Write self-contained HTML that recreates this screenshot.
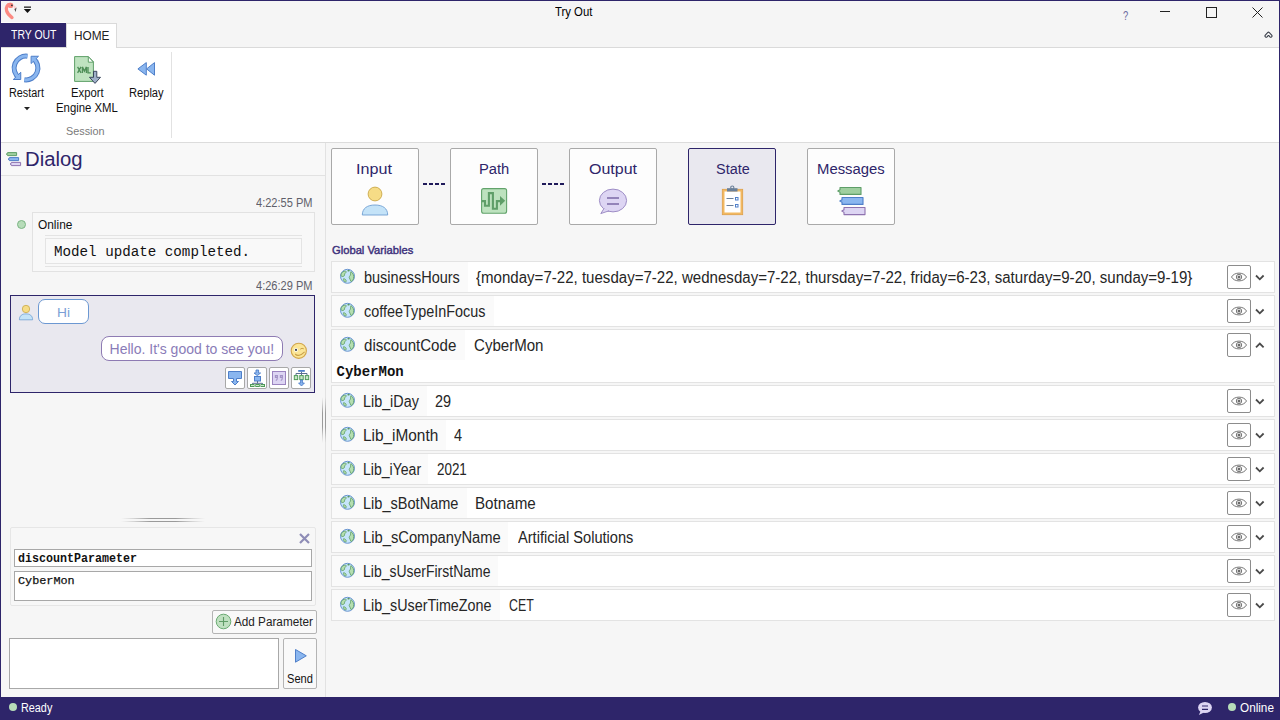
<!DOCTYPE html>
<html><head><meta charset="utf-8"><title>Try Out</title>
<style>
*{box-sizing:border-box;margin:0;padding:0}
html,body{width:1280px;height:720px;overflow:hidden;background:#f6f6f6;font-family:"Liberation Sans",sans-serif;color:#000}
.a{position:absolute}
.t{position:absolute;white-space:nowrap;line-height:1;transform-origin:0 0}
svg{position:absolute;overflow:visible}
</style></head><body>
<div class="a" style="left:0px;top:0px;width:1280px;height:23px;background:#f5f5f5"></div>
<div class="a" style="left:0px;top:22px;width:66px;height:1px;background:#fdfdfd"></div>
<svg style="left:0px;top:0px" width="20" height="20" viewBox="0 0 20 20"><path d="M11 4.6 C7.4 3.6 5.6 7.4 6.6 10.8 C7.4 13.6 9.6 15.8 12 17.6" stroke="#fc8a82" stroke-width="3.3" fill="none" stroke-linecap="round"/>
<circle cx="10.6" cy="5.4" r="2.7" fill="#fc8a82"/>
<circle cx="11.9" cy="5.3" r="0.9" fill="#333"/>
<path d="M13 4.6 L16.6 7.2 L14.4 9.4 Z" fill="#ffd3d3"/>
<path d="M14.4 9.2 L16.6 7.6 L15.6 12 Z" fill="#4a4a4a"/></svg>
<svg style="left:23px;top:6px" width="9" height="8" viewBox="0 0 9 8"><rect x="1" y="0.5" width="7" height="1.3" fill="#222"/><path d="M0.8 3 H8.2 L4.5 7 Z" fill="#111"/></svg>
<div class="a" style="left:1160px;top:11px;width:10px;height:1px;background:#222"></div>
<div class="a" style="left:1206px;top:7px;width:11px;height:11px;border:1px solid #222"></div>
<svg style="left:1252px;top:7px" width="11" height="11" viewBox="0 0 11 11"><path d="M0.5 0.5 L10.5 10.5 M10.5 0.5 L0.5 10.5" stroke="#222" stroke-width="1"/></svg>
<div class="a" style="left:0px;top:23px;width:1280px;height:24px;background:#f5f5f5"></div>
<div class="a" style="left:0px;top:47px;width:1280px;height:1px;background:#dadada"></div>
<div class="a" style="left:0px;top:23px;width:66px;height:24px;background:#2e256a"></div>
<div class="a" style="left:66px;top:23px;width:51px;height:25px;background:#fff;border:1px solid #dadada;border-bottom:none"></div>
<svg style="left:1264px;top:30px" width="10" height="9" viewBox="0 0 10 9"><path d="M2.2 6 L4.5 3.4 L6.8 6" stroke="#3a3f4a" stroke-width="3.4" fill="none" stroke-linecap="round" stroke-linejoin="round"/><path d="M2.2 6 L4.5 3.4 L6.8 6" stroke="#f5f5f5" stroke-width="1.3" fill="none" stroke-linecap="round" stroke-linejoin="round"/></svg>
<div class="a" style="left:1px;top:48px;width:1278px;height:94px;background:#fff"></div>
<div class="a" style="left:1px;top:142px;width:1278px;height:1px;background:#dcdcdc"></div>
<div class="a" style="left:171px;top:52px;width:1px;height:86px;background:#e2e2e2"></div>
<svg style="left:8px;top:50px" width="36" height="36" viewBox="0 0 36 36"><path d="M19.45 6.19 A11.9 11.9 0 0 0 11.17 27.75" stroke="#4f7fc9" stroke-width="5" fill="none"/>
<path d="M16.34 29.78 A11.9 11.9 0 0 0 24.83 8.25" stroke="#4f7fc9" stroke-width="5" fill="none"/>
<path d="M5.25 29.5 L12.75 29.5 L12.75 22.25 Z" fill="#8ab6ef" stroke="#4f7fc9" stroke-width="1" stroke-linejoin="round"/>
<path d="M23.1 6.25 L30.5 6.25 L23.1 13.5 Z" fill="#8ab6ef" stroke="#4f7fc9" stroke-width="1" stroke-linejoin="round"/>
<path d="M19.45 6.19 A11.9 11.9 0 0 0 11.17 27.75" stroke="#8ab6ef" stroke-width="3" fill="none"/>
<path d="M16.34 29.78 A11.9 11.9 0 0 0 24.83 8.25" stroke="#8ab6ef" stroke-width="3" fill="none"/>
<path d="M6.9 28.7 L12 28.7 L12 23.8 Z" fill="#8ab6ef"/>
<path d="M23.9 7 L28.8 7 L23.9 11.9 Z" fill="#8ab6ef"/></svg>
<svg style="left:24px;top:107px" width="6" height="4" viewBox="0 0 6 4"><path d="M0 0 H6 L3 3.2 Z" fill="#222"/></svg>
<svg style="left:70px;top:52px" width="36" height="36" viewBox="0 0 36 36"><path d="M4.6 4.6 H18.3 L23.4 9.7 V29.4 H4.6 Z" fill="#bfe3c0" stroke="#5fa068" stroke-width="1"/>
<path d="M18.3 4.6 V10.2 H23.4 Z" fill="#fff" stroke="#5fa068" stroke-width="1" stroke-linejoin="round"/>
<path d="M7.6 14.9 L11 20.9 M11 14.9 L7.6 20.9 M12.4 20.9 V14.9 L14.4 19.2 L16.4 14.9 V20.9 M18 14.9 V20.9 H20.8" stroke="#4f8f58" stroke-width="1.35" fill="none"/>
<path d="M23.5 19.3 H26.8 V25.3 H30.5 L25 31.4 L19.5 25.3 H23.5 Z" fill="#9fb0c8" stroke="#2f3b52" stroke-width="0.9" stroke-linejoin="round"/></svg>
<svg style="left:137px;top:61px" width="19" height="16" viewBox="0 0 19 16"><path d="M0.9 7.9 L9.3 1.6 V14.2 Z" fill="#8ab6ef" stroke="#4f7fc9" stroke-width="1" stroke-linejoin="round"/>
<path d="M9.6 7.9 L17.5 1.6 V14.2 Z" fill="#8ab6ef" stroke="#4f7fc9" stroke-width="1" stroke-linejoin="round"/></svg>
<div class="a" style="left:1px;top:143px;width:324px;height:32px;background:#f8f8f8"></div>
<div class="a" style="left:1px;top:175px;width:324px;height:1px;background:#e2e2e2"></div>
<div class="a" style="left:325px;top:143px;width:1px;height:554px;background:#e2e2e2"></div>
<svg style="left:5px;top:151px" width="17" height="16" viewBox="0 0 17 16"><path d="M2.6 1.6 H11.6 V4.6 H2.6 V3.8 L1.2 3.1 L2.6 2.4 Z" fill="#9fcf9f" stroke="#5e9e68" stroke-width="1" stroke-linejoin="round"/>
<path d="M4.4 6.6 H13.6 V9.6 H4.4 V8.8 L3 8.1 L4.4 7.4 Z" fill="#8ab6ef" stroke="#4f7fc9" stroke-width="1" stroke-linejoin="round"/>
<path d="M6.4 11.4 H15.6 V14.6 H6.4 V13.8 L5 13 L6.4 12.2 Z" fill="#ddd5f3" stroke="#8f73b0" stroke-width="1" stroke-linejoin="round"/></svg>
<div class="a" style="left:32px;top:212px;width:283px;height:60px;border:1px solid #e2e2e2;background:#f8f8f8"></div>
<div class="a" style="left:17px;top:220px;width:9px;height:9px;border-radius:50%;background:#b7dcb9;border:1px solid #7cb584"></div>
<div class="a" style="left:45px;top:235px;width:257px;height:1px;background:#e4e4e4"></div>
<div class="a" style="left:45px;top:238px;width:257px;height:26px;border:1px solid #e4e4e4;background:#f9f9f9"></div>
<div class="a" style="left:45px;top:266px;width:257px;height:1px;background:#e4e4e4"></div>
<div class="a" style="left:10px;top:295px;width:305px;height:98px;border:1px solid #2e256a;background:#e9e8ef"></div>
<svg style="left:18px;top:304px" width="16" height="17" viewBox="0 0 16 17"><circle cx="8" cy="5" r="3.7" fill="#f6dc86" stroke="#c9a84a" stroke-width="0.8"/>
<path d="M1.4 15.8 C1.4 11.5 4.2 9.9 8 9.9 C11.8 9.9 14.6 11.5 14.6 15.8 Z" fill="#c4e3f8" stroke="#6f9fd3" stroke-width="0.8"/></svg>
<div class="a" style="left:38px;top:299px;width:51px;height:25px;border:1px solid #6c98d2;border-radius:7px;background:#fff"></div>
<div class="a" style="left:101px;top:336px;width:182px;height:25px;border:1px solid #8e7bb3;border-radius:8px;background:#fff"></div>
<svg style="left:290px;top:342px" width="18" height="18" viewBox="0 0 18 18"><circle cx="8.8" cy="8.8" r="7.6" fill="#fbe596" stroke="#d2a64c" stroke-width="1.1"/>
<circle cx="6" cy="7.9" r="1.9" fill="#fff"/><circle cx="6" cy="7.9" r="1.1" fill="#3a4050"/>
<path d="M10.2 7.2 Q12 5.6 13.8 6.8" stroke="#c9a04a" stroke-width="1" fill="none"/>
<path d="M5.2 12 Q8.6 15.6 14.6 9.8" stroke="#c9a04a" stroke-width="1.1" fill="none"/></svg>
<div class="a" style="left:225px;top:367px;width:20px;height:22px;border:1px solid #a8a8a8;border-radius:2px;background:#fff"></div>
<div class="a" style="left:247px;top:367px;width:20px;height:22px;border:1px solid #a8a8a8;border-radius:2px;background:#fff"></div>
<div class="a" style="left:269px;top:367px;width:20px;height:22px;border:1px solid #a8a8a8;border-radius:2px;background:#fff"></div>
<div class="a" style="left:291px;top:367px;width:20px;height:22px;border:1px solid #a8a8a8;border-radius:2px;background:#fff"></div>
<svg style="left:227px;top:370px" width="17" height="17" viewBox="0 0 17 17"><path d="M1.5 1.5 H14.5 V8.5 H9.5 V11.5 H11.5 L8 15 L4.5 11.5 H6.5 V8.5 H1.5 Z" fill="#8ab6ef" stroke="#4f7fc9" stroke-width="1"/></svg>
<svg style="left:249px;top:369px" width="17" height="18" viewBox="0 0 17 18"><path d="M7 1 V4 H5 L8.3 6.6 L11.6 4 H9.6 V1 Z" fill="#8ab6ef" stroke="#4f7fc9" stroke-width="0.9"/>
<rect x="5.5" y="7.5" width="6" height="4.5" fill="#8ab6ef" stroke="#4f7fc9" stroke-width="1"/>
<path d="M8.5 12 V14.3 M3.5 16 V14.3 H13.5 V16" stroke="#5a6f90" stroke-width="1" fill="none"/>
<rect x="1.5" y="15.5" width="3.5" height="2" fill="#c9e8c9" stroke="#4e9a58" stroke-width="1"/><rect x="6.8" y="15.5" width="3.5" height="2" fill="#c9e8c9" stroke="#4e9a58" stroke-width="1"/><rect x="12" y="15.5" width="3.5" height="2" fill="#c9e8c9" stroke="#4e9a58" stroke-width="1"/></svg>
<svg style="left:271px;top:370px" width="17" height="17" viewBox="0 0 17 17"><rect x="1.5" y="1.5" width="13" height="13" fill="#ddd5f3" stroke="#9b84c0" stroke-width="1"/>
<path d="M4.4 5.6 H6.4 V7.4 H4.4 Z M6.4 7.4 Q6.4 9.6 4.8 10.6 M9.4 5.6 H11.4 V7.4 H9.4 Z M11.4 7.4 Q11.4 9.6 9.8 10.6" stroke="#a394c6" stroke-width="1.1" fill="none"/></svg>
<svg style="left:293px;top:369px" width="18" height="18" viewBox="0 0 18 18"><rect x="5.2" y="1" width="6.6" height="1.8" fill="#4f7fc9"/>
<path d="M8.5 2.8 V6.2 M3 6.2 V4.5 H14 V6.2" stroke="#5a6f90" stroke-width="1" fill="none"/>
<rect x="1.3" y="6.6" width="3.4" height="4" fill="#c9e8c9" stroke="#4e9a58" stroke-width="1"/>
<rect x="6.8" y="6.6" width="3.4" height="4" fill="#c9e8c9" stroke="#4e9a58" stroke-width="1"/>
<rect x="12.3" y="6.6" width="3.4" height="4" fill="#c9e8c9" stroke="#4e9a58" stroke-width="1"/>
<path d="M7.6 11 V14 H5.6 L8.5 17 L11.4 14 H9.4 V11 Z" fill="#8ab6ef" stroke="#4f7fc9" stroke-width="0.9"/></svg>
<div class="a" style="left:121px;top:518px;width:84px;height:1px;background:linear-gradient(90deg,rgba(150,150,150,0),rgba(150,150,150,.35) 15%,#9a9a9a 35%,#9a9a9a 65%,rgba(150,150,150,.35) 85%,rgba(150,150,150,0))"></div>
<div class="a" style="left:121px;top:521px;width:84px;height:1px;background:linear-gradient(90deg,rgba(150,150,150,0),rgba(150,150,150,.35) 15%,#9a9a9a 35%,#9a9a9a 65%,rgba(150,150,150,.35) 85%,rgba(150,150,150,0))"></div>
<div class="a" style="left:322px;top:397px;width:1px;height:46px;background:linear-gradient(180deg,rgba(150,150,150,0),rgba(150,150,150,.35) 15%,#9a9a9a 35%,#9a9a9a 65%,rgba(150,150,150,.35) 85%,rgba(150,150,150,0))"></div>
<div class="a" style="left:325px;top:397px;width:1px;height:46px;background:linear-gradient(180deg,rgba(150,150,150,0),rgba(150,150,150,.35) 15%,#9a9a9a 35%,#9a9a9a 65%,rgba(150,150,150,.35) 85%,rgba(150,150,150,0))"></div>
<div class="a" style="left:10px;top:527px;width:306px;height:79px;border:1px solid #e6e6e6;border-radius:2px;background:#f7f7f7"></div>
<svg style="left:299px;top:533px" width="11" height="11" viewBox="0 0 11 11"><path d="M1 1 L10 10 M10 1 L1 10" stroke="#8e8cb6" stroke-width="2.2"/></svg>
<div class="a" style="left:14px;top:549px;width:298px;height:18px;border:1px solid #a8a8a8;background:#fff"></div>
<div class="a" style="left:14px;top:571px;width:298px;height:30px;border:1px solid #a8a8a8;background:#fff"></div>
<div class="a" style="left:212px;top:610px;width:105px;height:24px;border:1px solid #b4b4b4;border-radius:2px;background:#f9f9f9"></div>
<svg style="left:215px;top:613px" width="17" height="17" viewBox="0 0 17 17"><circle cx="8.5" cy="8.5" r="7.3" fill="#bfe0c0" stroke="#6aaa72" stroke-width="1"/>
<path d="M8.5 4 V13 M4 8.5 H13" stroke="#5f9c66" stroke-width="1.1"/></svg>
<div class="a" style="left:9px;top:638px;width:270px;height:51px;border:1px solid #a8a8a8;background:#fff"></div>
<div class="a" style="left:283px;top:638px;width:34px;height:51px;border:1px solid #b4b4b4;border-radius:2px;background:#f9f9f9"></div>
<svg style="left:294px;top:648px" width="14" height="16" viewBox="0 0 14 16"><path d="M1.5 1.5 L12.3 7.8 L1.5 14.2 Z" fill="#8ab6ef" stroke="#4f7fc9" stroke-width="1" stroke-linejoin="round"/></svg>
<div class="a" style="left:331px;top:148px;width:88px;height:77px;border:1px solid #a9a9a9;border-radius:2px;background:#fdfdfd"></div>
<div class="a" style="left:450px;top:148px;width:88px;height:77px;border:1px solid #a9a9a9;border-radius:2px;background:#fdfdfd"></div>
<div class="a" style="left:569px;top:148px;width:88px;height:77px;border:1px solid #a9a9a9;border-radius:2px;background:#fdfdfd"></div>
<div class="a" style="left:688px;top:148px;width:88px;height:77px;border:1px solid #2e256a;border-radius:2px;background:#e9e8ef"></div>
<div class="a" style="left:807px;top:148px;width:88px;height:77px;border:1px solid #a9a9a9;border-radius:2px;background:#fdfdfd"></div>
<div class="a" style="left:423px;top:183px;width:22px;height:2px;background:repeating-linear-gradient(90deg,#1f1a5a 0 4px,transparent 4px 6px)"></div>
<div class="a" style="left:542px;top:183px;width:22px;height:2px;background:repeating-linear-gradient(90deg,#1f1a5a 0 4px,transparent 4px 6px)"></div>
<svg style="left:361px;top:186px" width="28" height="30" viewBox="0 0 28 30"><circle cx="14" cy="8" r="6.9" fill="#f6dc86" stroke="#c9a84a" stroke-width="0.9"/>
<path d="M1.3 29 C1.3 22.5 6 19 14 19 C22 19 26.7 22.5 26.7 29 Z" fill="#c4e3f8" stroke="#6f9fd3" stroke-width="0.9"/></svg>
<svg style="left:478px;top:185px" width="32" height="32" viewBox="0 0 32 32"><rect x="3.6" y="3.6" width="25" height="24.6" rx="2" fill="#bde2be" stroke="#62a36b" stroke-width="1.1"/>
<path d="M3.8 16.1 H7 V20.8 H10.9 V8.1 H14.9 V23.8 H18.9 V16.1 H22.5" stroke="#5f9e68" stroke-width="2.1" fill="none"/>
<path d="M22 10.9 L27.2 15.8 L22 20.7 Z" fill="#5f9e68"/></svg>
<svg style="left:598px;top:188px" width="30" height="27" viewBox="0 0 30 27"><ellipse cx="15" cy="12.5" rx="13.6" ry="11.4" fill="#ddd5f3" stroke="#9583bf" stroke-width="0.9"/>
<path d="M6 20.5 L2.8 25.6 L11 22.8" fill="#ddd5f3" stroke="#9583bf" stroke-width="0.9"/>
<path d="M9 10 H21 M9 16 H21" stroke="#7b68a6" stroke-width="1.6"/></svg>
<svg style="left:720px;top:185px" width="25" height="31" viewBox="0 0 25 31"><rect x="2.3" y="4.3" width="20.4" height="25.4" fill="#f2b860" stroke="#dda04a" stroke-width="0.8"/>
<rect x="4.5" y="6.5" width="16" height="21" fill="#fff"/>
<path d="M7 3.2 H17.5 V6.5 H7 Z" fill="#6a7f99"/>
<circle cx="12.3" cy="2.6" r="1.6" fill="none" stroke="#6a7f99" stroke-width="1.1"/>
<path d="M6.5 13.5 H13.5 M6.5 20.5 H13.5" stroke="#6a7f99" stroke-width="1"/>
<rect x="15.5" y="12.5" width="2.5" height="2.5" fill="none" stroke="#4f7fc9" stroke-width="1"/>
<rect x="15.5" y="19.5" width="2.5" height="2.5" fill="none" stroke="#4f7fc9" stroke-width="1"/></svg>
<svg style="left:836px;top:186px" width="32" height="30" viewBox="0 0 32 30"><path d="M4 1.5 H25 V8.4 H4 V6.2 L1.8 4.95 L4 3.7 Z" fill="#9fcf9f" stroke="#5e9e68" stroke-width="1.1" stroke-linejoin="round"/>
<path d="M6 11.5 H27 V18.4 H6 V16.2 L3.8 14.95 L6 13.7 Z" fill="#8ab6ef" stroke="#4f7fc9" stroke-width="1.1" stroke-linejoin="round"/>
<path d="M8 21.5 H29 V28.6 H8 V26.4 L5.8 25.05 L8 23.7 Z" fill="#ddd5f3" stroke="#8f73b0" stroke-width="1.1" stroke-linejoin="round"/></svg>
<div class="a" style="left:331px;top:261px;width:944px;height:32px;border:1px solid #e3e3e3;background:#fff"></div>
<div class="a" style="left:332px;top:262px;width:136px;height:30px;background:#fafafa"></div>
<svg style="left:339px;top:268px" width="17" height="17" viewBox="0 0 17 17"><g transform="translate(0.5 0.3)"><circle cx="8" cy="8" r="7" fill="#c6e5fa" stroke="#6a95d0" stroke-width="1"/>
<path d="M2.4 4.6 C3.6 2.8 5.8 2.4 6.8 3.4 C6.4 4.8 4.9 5 5 6.6 C5.1 7.8 3.8 8.4 2.1 8.1 C1.3 6.9 1.5 5.7 2.4 4.6 Z" fill="#b5dfb0" stroke="#5a9a60" stroke-width="0.8"/>
<path d="M7.8 2.1 C9 1.5 10.5 1.9 10.3 2.8 C9.5 3.6 8.2 3.4 7.8 2.1 Z" fill="#5a9a60"/>
<path d="M11.4 3.3 C13.7 4.8 14.6 7.5 14 10.3 C13.4 12.1 12.4 13 11.5 13.3 C11.3 11.5 9.9 10.7 9.7 9.1 C9.7 7.6 11.6 7.2 11 5.5 Z" fill="#b5dfb0" stroke="#5a9a60" stroke-width="0.8"/>
<path d="M4.1 10.4 C5.7 10.6 6.9 11.6 6.7 13.1 C6.3 13.9 5.3 13.7 4.5 12.7 C3.9 11.9 3.7 10.9 4.1 10.4 Z" fill="#b5dfb0" stroke="#5a9a60" stroke-width="0.8"/></g></svg>
<div class="a" style="left:1227px;top:265px;width:24px;height:24px;border:1px solid #8c8c8c;border-radius:2px;background:#fff"></div>
<svg style="left:1231px;top:272px" width="16" height="10" viewBox="0 0 16 10"><path d="M0.5 5 C3.3 -0.2 12.7 -0.2 15.5 5 C12.7 10.2 3.3 10.2 0.5 5 Z" fill="none" stroke="#777" stroke-width="1"/>
<circle cx="8" cy="5" r="2.7" fill="none" stroke="#777" stroke-width="1"/><circle cx="8" cy="5" r="1.5" fill="#6a6a6a"/></svg>
<svg style="left:1255px;top:273.8px" width="10" height="7" viewBox="0 0 10 7"><path d="M1 1.5 L4.8 5.3 L8.6 1.5" stroke="#4a4a4a" stroke-width="1.8" fill="none"/></svg>
<div class="a" style="left:331px;top:295px;width:944px;height:32px;border:1px solid #e3e3e3;background:#fff"></div>
<div class="a" style="left:332px;top:296px;width:162px;height:30px;background:#fafafa"></div>
<svg style="left:339px;top:302px" width="17" height="17" viewBox="0 0 17 17"><g transform="translate(0.5 0.3)"><circle cx="8" cy="8" r="7" fill="#c6e5fa" stroke="#6a95d0" stroke-width="1"/>
<path d="M2.4 4.6 C3.6 2.8 5.8 2.4 6.8 3.4 C6.4 4.8 4.9 5 5 6.6 C5.1 7.8 3.8 8.4 2.1 8.1 C1.3 6.9 1.5 5.7 2.4 4.6 Z" fill="#b5dfb0" stroke="#5a9a60" stroke-width="0.8"/>
<path d="M7.8 2.1 C9 1.5 10.5 1.9 10.3 2.8 C9.5 3.6 8.2 3.4 7.8 2.1 Z" fill="#5a9a60"/>
<path d="M11.4 3.3 C13.7 4.8 14.6 7.5 14 10.3 C13.4 12.1 12.4 13 11.5 13.3 C11.3 11.5 9.9 10.7 9.7 9.1 C9.7 7.6 11.6 7.2 11 5.5 Z" fill="#b5dfb0" stroke="#5a9a60" stroke-width="0.8"/>
<path d="M4.1 10.4 C5.7 10.6 6.9 11.6 6.7 13.1 C6.3 13.9 5.3 13.7 4.5 12.7 C3.9 11.9 3.7 10.9 4.1 10.4 Z" fill="#b5dfb0" stroke="#5a9a60" stroke-width="0.8"/></g></svg>
<div class="a" style="left:1227px;top:299px;width:24px;height:24px;border:1px solid #8c8c8c;border-radius:2px;background:#fff"></div>
<svg style="left:1231px;top:306px" width="16" height="10" viewBox="0 0 16 10"><path d="M0.5 5 C3.3 -0.2 12.7 -0.2 15.5 5 C12.7 10.2 3.3 10.2 0.5 5 Z" fill="none" stroke="#777" stroke-width="1"/>
<circle cx="8" cy="5" r="2.7" fill="none" stroke="#777" stroke-width="1"/><circle cx="8" cy="5" r="1.5" fill="#6a6a6a"/></svg>
<svg style="left:1255px;top:307.8px" width="10" height="7" viewBox="0 0 10 7"><path d="M1 1.5 L4.8 5.3 L8.6 1.5" stroke="#4a4a4a" stroke-width="1.8" fill="none"/></svg>
<div class="a" style="left:331px;top:329px;width:944px;height:54px;border:1px solid #e3e3e3;background:#fff"></div>
<div class="a" style="left:332px;top:330px;width:133px;height:30px;background:#fafafa"></div>
<svg style="left:339px;top:336px" width="17" height="17" viewBox="0 0 17 17"><g transform="translate(0.5 0.3)"><circle cx="8" cy="8" r="7" fill="#c6e5fa" stroke="#6a95d0" stroke-width="1"/>
<path d="M2.4 4.6 C3.6 2.8 5.8 2.4 6.8 3.4 C6.4 4.8 4.9 5 5 6.6 C5.1 7.8 3.8 8.4 2.1 8.1 C1.3 6.9 1.5 5.7 2.4 4.6 Z" fill="#b5dfb0" stroke="#5a9a60" stroke-width="0.8"/>
<path d="M7.8 2.1 C9 1.5 10.5 1.9 10.3 2.8 C9.5 3.6 8.2 3.4 7.8 2.1 Z" fill="#5a9a60"/>
<path d="M11.4 3.3 C13.7 4.8 14.6 7.5 14 10.3 C13.4 12.1 12.4 13 11.5 13.3 C11.3 11.5 9.9 10.7 9.7 9.1 C9.7 7.6 11.6 7.2 11 5.5 Z" fill="#b5dfb0" stroke="#5a9a60" stroke-width="0.8"/>
<path d="M4.1 10.4 C5.7 10.6 6.9 11.6 6.7 13.1 C6.3 13.9 5.3 13.7 4.5 12.7 C3.9 11.9 3.7 10.9 4.1 10.4 Z" fill="#b5dfb0" stroke="#5a9a60" stroke-width="0.8"/></g></svg>
<div class="a" style="left:1227px;top:333px;width:24px;height:24px;border:1px solid #8c8c8c;border-radius:2px;background:#fff"></div>
<svg style="left:1231px;top:340px" width="16" height="10" viewBox="0 0 16 10"><path d="M0.5 5 C3.3 -0.2 12.7 -0.2 15.5 5 C12.7 10.2 3.3 10.2 0.5 5 Z" fill="none" stroke="#777" stroke-width="1"/>
<circle cx="8" cy="5" r="2.7" fill="none" stroke="#777" stroke-width="1"/><circle cx="8" cy="5" r="1.5" fill="#6a6a6a"/></svg>
<svg style="left:1255px;top:341.8px" width="10" height="7" viewBox="0 0 10 7"><path d="M1 5.3 L4.8 1.5 L8.6 5.3" stroke="#4a4a4a" stroke-width="1.8" fill="none"/></svg>
<div class="a" style="left:331px;top:385px;width:944px;height:32px;border:1px solid #e3e3e3;background:#fff"></div>
<div class="a" style="left:332px;top:386px;width:95px;height:30px;background:#fafafa"></div>
<svg style="left:339px;top:392px" width="17" height="17" viewBox="0 0 17 17"><g transform="translate(0.5 0.3)"><circle cx="8" cy="8" r="7" fill="#c6e5fa" stroke="#6a95d0" stroke-width="1"/>
<path d="M2.4 4.6 C3.6 2.8 5.8 2.4 6.8 3.4 C6.4 4.8 4.9 5 5 6.6 C5.1 7.8 3.8 8.4 2.1 8.1 C1.3 6.9 1.5 5.7 2.4 4.6 Z" fill="#b5dfb0" stroke="#5a9a60" stroke-width="0.8"/>
<path d="M7.8 2.1 C9 1.5 10.5 1.9 10.3 2.8 C9.5 3.6 8.2 3.4 7.8 2.1 Z" fill="#5a9a60"/>
<path d="M11.4 3.3 C13.7 4.8 14.6 7.5 14 10.3 C13.4 12.1 12.4 13 11.5 13.3 C11.3 11.5 9.9 10.7 9.7 9.1 C9.7 7.6 11.6 7.2 11 5.5 Z" fill="#b5dfb0" stroke="#5a9a60" stroke-width="0.8"/>
<path d="M4.1 10.4 C5.7 10.6 6.9 11.6 6.7 13.1 C6.3 13.9 5.3 13.7 4.5 12.7 C3.9 11.9 3.7 10.9 4.1 10.4 Z" fill="#b5dfb0" stroke="#5a9a60" stroke-width="0.8"/></g></svg>
<div class="a" style="left:1227px;top:389px;width:24px;height:24px;border:1px solid #8c8c8c;border-radius:2px;background:#fff"></div>
<svg style="left:1231px;top:396px" width="16" height="10" viewBox="0 0 16 10"><path d="M0.5 5 C3.3 -0.2 12.7 -0.2 15.5 5 C12.7 10.2 3.3 10.2 0.5 5 Z" fill="none" stroke="#777" stroke-width="1"/>
<circle cx="8" cy="5" r="2.7" fill="none" stroke="#777" stroke-width="1"/><circle cx="8" cy="5" r="1.5" fill="#6a6a6a"/></svg>
<svg style="left:1255px;top:397.8px" width="10" height="7" viewBox="0 0 10 7"><path d="M1 1.5 L4.8 5.3 L8.6 1.5" stroke="#4a4a4a" stroke-width="1.8" fill="none"/></svg>
<div class="a" style="left:331px;top:419px;width:944px;height:32px;border:1px solid #e3e3e3;background:#fff"></div>
<div class="a" style="left:332px;top:420px;width:114px;height:30px;background:#fafafa"></div>
<svg style="left:339px;top:426px" width="17" height="17" viewBox="0 0 17 17"><g transform="translate(0.5 0.3)"><circle cx="8" cy="8" r="7" fill="#c6e5fa" stroke="#6a95d0" stroke-width="1"/>
<path d="M2.4 4.6 C3.6 2.8 5.8 2.4 6.8 3.4 C6.4 4.8 4.9 5 5 6.6 C5.1 7.8 3.8 8.4 2.1 8.1 C1.3 6.9 1.5 5.7 2.4 4.6 Z" fill="#b5dfb0" stroke="#5a9a60" stroke-width="0.8"/>
<path d="M7.8 2.1 C9 1.5 10.5 1.9 10.3 2.8 C9.5 3.6 8.2 3.4 7.8 2.1 Z" fill="#5a9a60"/>
<path d="M11.4 3.3 C13.7 4.8 14.6 7.5 14 10.3 C13.4 12.1 12.4 13 11.5 13.3 C11.3 11.5 9.9 10.7 9.7 9.1 C9.7 7.6 11.6 7.2 11 5.5 Z" fill="#b5dfb0" stroke="#5a9a60" stroke-width="0.8"/>
<path d="M4.1 10.4 C5.7 10.6 6.9 11.6 6.7 13.1 C6.3 13.9 5.3 13.7 4.5 12.7 C3.9 11.9 3.7 10.9 4.1 10.4 Z" fill="#b5dfb0" stroke="#5a9a60" stroke-width="0.8"/></g></svg>
<div class="a" style="left:1227px;top:423px;width:24px;height:24px;border:1px solid #8c8c8c;border-radius:2px;background:#fff"></div>
<svg style="left:1231px;top:430px" width="16" height="10" viewBox="0 0 16 10"><path d="M0.5 5 C3.3 -0.2 12.7 -0.2 15.5 5 C12.7 10.2 3.3 10.2 0.5 5 Z" fill="none" stroke="#777" stroke-width="1"/>
<circle cx="8" cy="5" r="2.7" fill="none" stroke="#777" stroke-width="1"/><circle cx="8" cy="5" r="1.5" fill="#6a6a6a"/></svg>
<svg style="left:1255px;top:431.8px" width="10" height="7" viewBox="0 0 10 7"><path d="M1 1.5 L4.8 5.3 L8.6 1.5" stroke="#4a4a4a" stroke-width="1.8" fill="none"/></svg>
<div class="a" style="left:331px;top:453px;width:944px;height:32px;border:1px solid #e3e3e3;background:#fff"></div>
<div class="a" style="left:332px;top:454px;width:96px;height:30px;background:#fafafa"></div>
<svg style="left:339px;top:460px" width="17" height="17" viewBox="0 0 17 17"><g transform="translate(0.5 0.3)"><circle cx="8" cy="8" r="7" fill="#c6e5fa" stroke="#6a95d0" stroke-width="1"/>
<path d="M2.4 4.6 C3.6 2.8 5.8 2.4 6.8 3.4 C6.4 4.8 4.9 5 5 6.6 C5.1 7.8 3.8 8.4 2.1 8.1 C1.3 6.9 1.5 5.7 2.4 4.6 Z" fill="#b5dfb0" stroke="#5a9a60" stroke-width="0.8"/>
<path d="M7.8 2.1 C9 1.5 10.5 1.9 10.3 2.8 C9.5 3.6 8.2 3.4 7.8 2.1 Z" fill="#5a9a60"/>
<path d="M11.4 3.3 C13.7 4.8 14.6 7.5 14 10.3 C13.4 12.1 12.4 13 11.5 13.3 C11.3 11.5 9.9 10.7 9.7 9.1 C9.7 7.6 11.6 7.2 11 5.5 Z" fill="#b5dfb0" stroke="#5a9a60" stroke-width="0.8"/>
<path d="M4.1 10.4 C5.7 10.6 6.9 11.6 6.7 13.1 C6.3 13.9 5.3 13.7 4.5 12.7 C3.9 11.9 3.7 10.9 4.1 10.4 Z" fill="#b5dfb0" stroke="#5a9a60" stroke-width="0.8"/></g></svg>
<div class="a" style="left:1227px;top:457px;width:24px;height:24px;border:1px solid #8c8c8c;border-radius:2px;background:#fff"></div>
<svg style="left:1231px;top:464px" width="16" height="10" viewBox="0 0 16 10"><path d="M0.5 5 C3.3 -0.2 12.7 -0.2 15.5 5 C12.7 10.2 3.3 10.2 0.5 5 Z" fill="none" stroke="#777" stroke-width="1"/>
<circle cx="8" cy="5" r="2.7" fill="none" stroke="#777" stroke-width="1"/><circle cx="8" cy="5" r="1.5" fill="#6a6a6a"/></svg>
<svg style="left:1255px;top:465.8px" width="10" height="7" viewBox="0 0 10 7"><path d="M1 1.5 L4.8 5.3 L8.6 1.5" stroke="#4a4a4a" stroke-width="1.8" fill="none"/></svg>
<div class="a" style="left:331px;top:487px;width:944px;height:32px;border:1px solid #e3e3e3;background:#fff"></div>
<div class="a" style="left:332px;top:488px;width:135px;height:30px;background:#fafafa"></div>
<svg style="left:339px;top:494px" width="17" height="17" viewBox="0 0 17 17"><g transform="translate(0.5 0.3)"><circle cx="8" cy="8" r="7" fill="#c6e5fa" stroke="#6a95d0" stroke-width="1"/>
<path d="M2.4 4.6 C3.6 2.8 5.8 2.4 6.8 3.4 C6.4 4.8 4.9 5 5 6.6 C5.1 7.8 3.8 8.4 2.1 8.1 C1.3 6.9 1.5 5.7 2.4 4.6 Z" fill="#b5dfb0" stroke="#5a9a60" stroke-width="0.8"/>
<path d="M7.8 2.1 C9 1.5 10.5 1.9 10.3 2.8 C9.5 3.6 8.2 3.4 7.8 2.1 Z" fill="#5a9a60"/>
<path d="M11.4 3.3 C13.7 4.8 14.6 7.5 14 10.3 C13.4 12.1 12.4 13 11.5 13.3 C11.3 11.5 9.9 10.7 9.7 9.1 C9.7 7.6 11.6 7.2 11 5.5 Z" fill="#b5dfb0" stroke="#5a9a60" stroke-width="0.8"/>
<path d="M4.1 10.4 C5.7 10.6 6.9 11.6 6.7 13.1 C6.3 13.9 5.3 13.7 4.5 12.7 C3.9 11.9 3.7 10.9 4.1 10.4 Z" fill="#b5dfb0" stroke="#5a9a60" stroke-width="0.8"/></g></svg>
<div class="a" style="left:1227px;top:491px;width:24px;height:24px;border:1px solid #8c8c8c;border-radius:2px;background:#fff"></div>
<svg style="left:1231px;top:498px" width="16" height="10" viewBox="0 0 16 10"><path d="M0.5 5 C3.3 -0.2 12.7 -0.2 15.5 5 C12.7 10.2 3.3 10.2 0.5 5 Z" fill="none" stroke="#777" stroke-width="1"/>
<circle cx="8" cy="5" r="2.7" fill="none" stroke="#777" stroke-width="1"/><circle cx="8" cy="5" r="1.5" fill="#6a6a6a"/></svg>
<svg style="left:1255px;top:499.8px" width="10" height="7" viewBox="0 0 10 7"><path d="M1 1.5 L4.8 5.3 L8.6 1.5" stroke="#4a4a4a" stroke-width="1.8" fill="none"/></svg>
<div class="a" style="left:331px;top:521px;width:944px;height:32px;border:1px solid #e3e3e3;background:#fff"></div>
<div class="a" style="left:332px;top:522px;width:176px;height:30px;background:#fafafa"></div>
<svg style="left:339px;top:528px" width="17" height="17" viewBox="0 0 17 17"><g transform="translate(0.5 0.3)"><circle cx="8" cy="8" r="7" fill="#c6e5fa" stroke="#6a95d0" stroke-width="1"/>
<path d="M2.4 4.6 C3.6 2.8 5.8 2.4 6.8 3.4 C6.4 4.8 4.9 5 5 6.6 C5.1 7.8 3.8 8.4 2.1 8.1 C1.3 6.9 1.5 5.7 2.4 4.6 Z" fill="#b5dfb0" stroke="#5a9a60" stroke-width="0.8"/>
<path d="M7.8 2.1 C9 1.5 10.5 1.9 10.3 2.8 C9.5 3.6 8.2 3.4 7.8 2.1 Z" fill="#5a9a60"/>
<path d="M11.4 3.3 C13.7 4.8 14.6 7.5 14 10.3 C13.4 12.1 12.4 13 11.5 13.3 C11.3 11.5 9.9 10.7 9.7 9.1 C9.7 7.6 11.6 7.2 11 5.5 Z" fill="#b5dfb0" stroke="#5a9a60" stroke-width="0.8"/>
<path d="M4.1 10.4 C5.7 10.6 6.9 11.6 6.7 13.1 C6.3 13.9 5.3 13.7 4.5 12.7 C3.9 11.9 3.7 10.9 4.1 10.4 Z" fill="#b5dfb0" stroke="#5a9a60" stroke-width="0.8"/></g></svg>
<div class="a" style="left:1227px;top:525px;width:24px;height:24px;border:1px solid #8c8c8c;border-radius:2px;background:#fff"></div>
<svg style="left:1231px;top:532px" width="16" height="10" viewBox="0 0 16 10"><path d="M0.5 5 C3.3 -0.2 12.7 -0.2 15.5 5 C12.7 10.2 3.3 10.2 0.5 5 Z" fill="none" stroke="#777" stroke-width="1"/>
<circle cx="8" cy="5" r="2.7" fill="none" stroke="#777" stroke-width="1"/><circle cx="8" cy="5" r="1.5" fill="#6a6a6a"/></svg>
<svg style="left:1255px;top:533.8px" width="10" height="7" viewBox="0 0 10 7"><path d="M1 1.5 L4.8 5.3 L8.6 1.5" stroke="#4a4a4a" stroke-width="1.8" fill="none"/></svg>
<div class="a" style="left:331px;top:555px;width:944px;height:32px;border:1px solid #e3e3e3;background:#fff"></div>
<div class="a" style="left:332px;top:556px;width:166px;height:30px;background:#fafafa"></div>
<svg style="left:339px;top:562px" width="17" height="17" viewBox="0 0 17 17"><g transform="translate(0.5 0.3)"><circle cx="8" cy="8" r="7" fill="#c6e5fa" stroke="#6a95d0" stroke-width="1"/>
<path d="M2.4 4.6 C3.6 2.8 5.8 2.4 6.8 3.4 C6.4 4.8 4.9 5 5 6.6 C5.1 7.8 3.8 8.4 2.1 8.1 C1.3 6.9 1.5 5.7 2.4 4.6 Z" fill="#b5dfb0" stroke="#5a9a60" stroke-width="0.8"/>
<path d="M7.8 2.1 C9 1.5 10.5 1.9 10.3 2.8 C9.5 3.6 8.2 3.4 7.8 2.1 Z" fill="#5a9a60"/>
<path d="M11.4 3.3 C13.7 4.8 14.6 7.5 14 10.3 C13.4 12.1 12.4 13 11.5 13.3 C11.3 11.5 9.9 10.7 9.7 9.1 C9.7 7.6 11.6 7.2 11 5.5 Z" fill="#b5dfb0" stroke="#5a9a60" stroke-width="0.8"/>
<path d="M4.1 10.4 C5.7 10.6 6.9 11.6 6.7 13.1 C6.3 13.9 5.3 13.7 4.5 12.7 C3.9 11.9 3.7 10.9 4.1 10.4 Z" fill="#b5dfb0" stroke="#5a9a60" stroke-width="0.8"/></g></svg>
<div class="a" style="left:1227px;top:559px;width:24px;height:24px;border:1px solid #8c8c8c;border-radius:2px;background:#fff"></div>
<svg style="left:1231px;top:566px" width="16" height="10" viewBox="0 0 16 10"><path d="M0.5 5 C3.3 -0.2 12.7 -0.2 15.5 5 C12.7 10.2 3.3 10.2 0.5 5 Z" fill="none" stroke="#777" stroke-width="1"/>
<circle cx="8" cy="5" r="2.7" fill="none" stroke="#777" stroke-width="1"/><circle cx="8" cy="5" r="1.5" fill="#6a6a6a"/></svg>
<svg style="left:1255px;top:567.8px" width="10" height="7" viewBox="0 0 10 7"><path d="M1 1.5 L4.8 5.3 L8.6 1.5" stroke="#4a4a4a" stroke-width="1.8" fill="none"/></svg>
<div class="a" style="left:331px;top:589px;width:944px;height:32px;border:1px solid #e3e3e3;background:#fff"></div>
<div class="a" style="left:332px;top:590px;width:168px;height:30px;background:#fafafa"></div>
<svg style="left:339px;top:596px" width="17" height="17" viewBox="0 0 17 17"><g transform="translate(0.5 0.3)"><circle cx="8" cy="8" r="7" fill="#c6e5fa" stroke="#6a95d0" stroke-width="1"/>
<path d="M2.4 4.6 C3.6 2.8 5.8 2.4 6.8 3.4 C6.4 4.8 4.9 5 5 6.6 C5.1 7.8 3.8 8.4 2.1 8.1 C1.3 6.9 1.5 5.7 2.4 4.6 Z" fill="#b5dfb0" stroke="#5a9a60" stroke-width="0.8"/>
<path d="M7.8 2.1 C9 1.5 10.5 1.9 10.3 2.8 C9.5 3.6 8.2 3.4 7.8 2.1 Z" fill="#5a9a60"/>
<path d="M11.4 3.3 C13.7 4.8 14.6 7.5 14 10.3 C13.4 12.1 12.4 13 11.5 13.3 C11.3 11.5 9.9 10.7 9.7 9.1 C9.7 7.6 11.6 7.2 11 5.5 Z" fill="#b5dfb0" stroke="#5a9a60" stroke-width="0.8"/>
<path d="M4.1 10.4 C5.7 10.6 6.9 11.6 6.7 13.1 C6.3 13.9 5.3 13.7 4.5 12.7 C3.9 11.9 3.7 10.9 4.1 10.4 Z" fill="#b5dfb0" stroke="#5a9a60" stroke-width="0.8"/></g></svg>
<div class="a" style="left:1227px;top:593px;width:24px;height:24px;border:1px solid #8c8c8c;border-radius:2px;background:#fff"></div>
<svg style="left:1231px;top:600px" width="16" height="10" viewBox="0 0 16 10"><path d="M0.5 5 C3.3 -0.2 12.7 -0.2 15.5 5 C12.7 10.2 3.3 10.2 0.5 5 Z" fill="none" stroke="#777" stroke-width="1"/>
<circle cx="8" cy="5" r="2.7" fill="none" stroke="#777" stroke-width="1"/><circle cx="8" cy="5" r="1.5" fill="#6a6a6a"/></svg>
<svg style="left:1255px;top:601.8px" width="10" height="7" viewBox="0 0 10 7"><path d="M1 1.5 L4.8 5.3 L8.6 1.5" stroke="#4a4a4a" stroke-width="1.8" fill="none"/></svg>
<div class="a" style="left:0px;top:697px;width:1280px;height:23px;background:#2e256a"></div>
<div class="a" style="left:8.5px;top:703px;width:8px;height:8px;border-radius:50%;background:#b7dcb9"></div>
<svg style="left:1197px;top:701px" width="16" height="15" viewBox="0 0 16 15"><ellipse cx="8" cy="6.5" rx="6.9" ry="5.6" fill="#ddd5f3"/>
<path d="M3.5 10.5 L1.8 14 L7 11.6 Z" fill="#ddd5f3"/>
<path d="M5 5 H11 M5 8.3 H11" stroke="#2e256a" stroke-width="1.2"/></svg>
<div class="a" style="left:1227.5px;top:703px;width:8px;height:8px;border-radius:50%;background:#b7dcb9"></div>
<div class="a" style="left:0px;top:0px;width:1280px;height:1px;background:#2e256a"></div>
<div class="a" style="left:0px;top:0px;width:1px;height:697px;background:#2e256a"></div>
<div class="a" style="left:1279px;top:0px;width:1px;height:697px;background:#2e256a"></div>
<div class="t" style="left:555.00px;top:6.00px;font-family:'Liberation Sans',sans-serif;font-size:12px;font-weight:400;color:#000;transform:scaleX(0.9447);">Try Out</div>
<div class="t" style="left:1123.00px;top:10.00px;font-family:'Liberation Sans',sans-serif;font-size:12px;font-weight:400;color:#6b6aa0;transform:scaleX(0.7857);">?</div>
<div class="t" style="left:10.50px;top:29.00px;font-family:'Liberation Sans',sans-serif;font-size:12.5px;font-weight:400;color:#fff;transform:scaleX(0.8364);">TRY OUT</div>
<div class="t" style="left:73.75px;top:30.00px;font-family:'Liberation Sans',sans-serif;font-size:12.5px;font-weight:400;color:#222;transform:scaleX(0.9457);">HOME</div>
<div class="t" style="left:8.50px;top:86.60px;font-family:'Liberation Sans',sans-serif;font-size:12px;font-weight:400;color:#111;transform:scaleX(0.9023);">Restart</div>
<div class="t" style="left:70.60px;top:86.60px;font-family:'Liberation Sans',sans-serif;font-size:12px;font-weight:400;color:#111;transform:scaleX(0.9378);">Export</div>
<div class="t" style="left:55.60px;top:101.90px;font-family:'Liberation Sans',sans-serif;font-size:12px;font-weight:400;color:#111;transform:scaleX(0.9460);">Engine XML</div>
<div class="t" style="left:129.40px;top:86.60px;font-family:'Liberation Sans',sans-serif;font-size:12px;font-weight:400;color:#111;transform:scaleX(0.9263);">Replay</div>
<div class="t" style="left:66.25px;top:125.75px;font-family:'Liberation Sans',sans-serif;font-size:11.5px;font-weight:400;color:#7a7a7a;transform:scaleX(0.9416);">Session</div>
<div class="t" style="left:25.48px;top:148.80px;font-family:'Liberation Sans',sans-serif;font-size:20px;font-weight:400;color:#2e256a;transform:scaleX(1.0151);">Dialog</div>
<div class="t" style="left:256.00px;top:196.90px;font-family:'Liberation Sans',sans-serif;font-size:12px;font-weight:400;color:#5f5f6a;transform:scaleX(0.9206);">4:22:55 PM</div>
<div class="t" style="left:37.50px;top:219.00px;font-family:'Liberation Sans',sans-serif;font-size:12.5px;font-weight:400;color:#111;transform:scaleX(0.9508);">Online</div>
<div class="t" style="left:54.00px;top:244.60px;font-family:'Liberation Mono',monospace;font-size:14.3px;font-weight:400;color:#111;transform:scaleX(0.9936);">Model update completed.</div>
<div class="t" style="left:256.00px;top:279.90px;font-family:'Liberation Sans',sans-serif;font-size:12px;font-weight:400;color:#5f5f6a;transform:scaleX(0.9206);">4:26:29 PM</div>
<div class="t" style="left:56.73px;top:305.90px;font-family:'Liberation Sans',sans-serif;font-size:13.5px;font-weight:400;color:#7b9fd6;transform:scaleX(1.0213);">Hi</div>
<div class="t" style="left:109.60px;top:342.00px;font-family:'Liberation Sans',sans-serif;font-size:14px;font-weight:400;color:#8a7cb8;">Hello. It's good to see you!</div>
<div class="t" style="left:18.10px;top:552.90px;font-family:'Liberation Mono',monospace;font-size:12px;font-weight:700;color:#111;transform:scaleX(0.9720);">discountParameter</div>
<div class="t" style="left:18.10px;top:576.00px;font-family:'Liberation Mono',monospace;font-size:11.7px;font-weight:400;color:#111;transform:scaleX(1.0101);-webkit-text-stroke:0.25px #111;">CyberMon</div>
<div class="t" style="left:234.40px;top:616.00px;font-family:'Liberation Sans',sans-serif;font-size:12.5px;font-weight:400;color:#222;transform:scaleX(0.9379);">Add Parameter</div>
<div class="t" style="left:287.25px;top:672.75px;font-family:'Liberation Sans',sans-serif;font-size:12px;font-weight:400;color:#111;transform:scaleX(0.9232);">Send</div>
<div class="t" style="left:20.60px;top:701.50px;font-family:'Liberation Sans',sans-serif;font-size:12px;font-weight:400;color:#fff;transform:scaleX(0.9023);">Ready</div>
<div class="t" style="left:1239.75px;top:701.50px;font-family:'Liberation Sans',sans-serif;font-size:12px;font-weight:400;color:#fff;transform:scaleX(0.9782);">Online</div>
<div class="t" style="left:356.46px;top:160.75px;font-family:'Liberation Sans',sans-serif;font-size:15.5px;font-weight:400;color:#2e256a;transform:scaleX(1.0419);">Input</div>
<div class="t" style="left:478.80px;top:160.75px;font-family:'Liberation Sans',sans-serif;font-size:15.5px;font-weight:400;color:#2e256a;transform:scaleX(0.9499);">Path</div>
<div class="t" style="left:588.50px;top:160.75px;font-family:'Liberation Sans',sans-serif;font-size:15.5px;font-weight:400;color:#2e256a;transform:scaleX(1.0323);">Output</div>
<div class="t" style="left:715.60px;top:160.75px;font-family:'Liberation Sans',sans-serif;font-size:15.5px;font-weight:400;color:#2e256a;transform:scaleX(0.9319);">State</div>
<div class="t" style="left:816.79px;top:160.75px;font-family:'Liberation Sans',sans-serif;font-size:15.5px;font-weight:400;color:#2e256a;transform:scaleX(0.9586);">Messages</div>
<div class="t" style="left:331.60px;top:245.10px;font-family:'Liberation Sans',sans-serif;font-size:10.8px;font-weight:400;color:#3b2f7a;transform:scaleX(1.0364);-webkit-text-stroke:0.4px #3b2f7a;">Global Variables</div>
<div class="t" style="left:363.83px;top:269.90px;font-family:'Liberation Sans',sans-serif;font-size:15.8px;font-weight:400;color:#262626;transform:scaleX(0.9171);">businessHours</div>
<div class="t" style="left:476.00px;top:269.90px;font-family:'Liberation Sans',sans-serif;font-size:15.8px;font-weight:400;color:#262626;transform:scaleX(0.9534);">{monday=7-22, tuesday=7-22, wednesday=7-22, thursday=7-22, friday=6-23, saturday=9-20, sunday=9-19}</div>
<div class="t" style="left:364.00px;top:303.90px;font-family:'Liberation Sans',sans-serif;font-size:15.8px;font-weight:400;color:#262626;transform:scaleX(0.9116);">coffeeTypeInFocus</div>
<div class="t" style="left:364.00px;top:337.90px;font-family:'Liberation Sans',sans-serif;font-size:15.8px;font-weight:400;color:#262626;transform:scaleX(0.9554);">discountCode</div>
<div class="t" style="left:473.50px;top:337.90px;font-family:'Liberation Sans',sans-serif;font-size:15.8px;font-weight:400;color:#262626;transform:scaleX(0.9538);">CyberMon</div>
<div class="t" style="left:363.09px;top:393.90px;font-family:'Liberation Sans',sans-serif;font-size:15.8px;font-weight:400;color:#262626;transform:scaleX(0.9081);">Lib_iDay</div>
<div class="t" style="left:434.75px;top:393.90px;font-family:'Liberation Sans',sans-serif;font-size:15.8px;font-weight:400;color:#262626;transform:scaleX(0.9137);">29</div>
<div class="t" style="left:363.03px;top:427.90px;font-family:'Liberation Sans',sans-serif;font-size:15.8px;font-weight:400;color:#262626;transform:scaleX(0.9736);">Lib_iMonth</div>
<div class="t" style="left:454.00px;top:427.90px;font-family:'Liberation Sans',sans-serif;font-size:15.8px;font-weight:400;color:#262626;transform:scaleX(0.9167);">4</div>
<div class="t" style="left:363.11px;top:461.90px;font-family:'Liberation Sans',sans-serif;font-size:15.8px;font-weight:400;color:#262626;transform:scaleX(0.8902);">Lib_iYear</div>
<div class="t" style="left:437.25px;top:461.90px;font-family:'Liberation Sans',sans-serif;font-size:15.8px;font-weight:400;color:#262626;transform:scaleX(0.8485);">2021</div>
<div class="t" style="left:363.08px;top:495.90px;font-family:'Liberation Sans',sans-serif;font-size:15.8px;font-weight:400;color:#262626;transform:scaleX(0.9214);">Lib_sBotName</div>
<div class="t" style="left:474.54px;top:495.90px;font-family:'Liberation Sans',sans-serif;font-size:15.8px;font-weight:400;color:#262626;transform:scaleX(0.9609);">Botname</div>
<div class="t" style="left:363.07px;top:529.90px;font-family:'Liberation Sans',sans-serif;font-size:15.8px;font-weight:400;color:#262626;transform:scaleX(0.9337);">Lib_sCompanyName</div>
<div class="t" style="left:518.00px;top:529.90px;font-family:'Liberation Sans',sans-serif;font-size:15.8px;font-weight:400;color:#262626;transform:scaleX(0.9257);">Artificial Solutions</div>
<div class="t" style="left:363.11px;top:563.90px;font-family:'Liberation Sans',sans-serif;font-size:15.8px;font-weight:400;color:#262626;transform:scaleX(0.8853);">Lib_sUserFirstName</div>
<div class="t" style="left:363.09px;top:597.90px;font-family:'Liberation Sans',sans-serif;font-size:15.8px;font-weight:400;color:#262626;transform:scaleX(0.9070);">Lib_sUserTimeZone</div>
<div class="t" style="left:508.50px;top:597.90px;font-family:'Liberation Sans',sans-serif;font-size:15.8px;font-weight:400;color:#262626;transform:scaleX(0.7826);">CET</div>
<div class="t" style="left:336.50px;top:364.50px;font-family:'Liberation Mono',monospace;font-size:14px;font-weight:700;color:#111;">CyberMon</div>
</body></html>
